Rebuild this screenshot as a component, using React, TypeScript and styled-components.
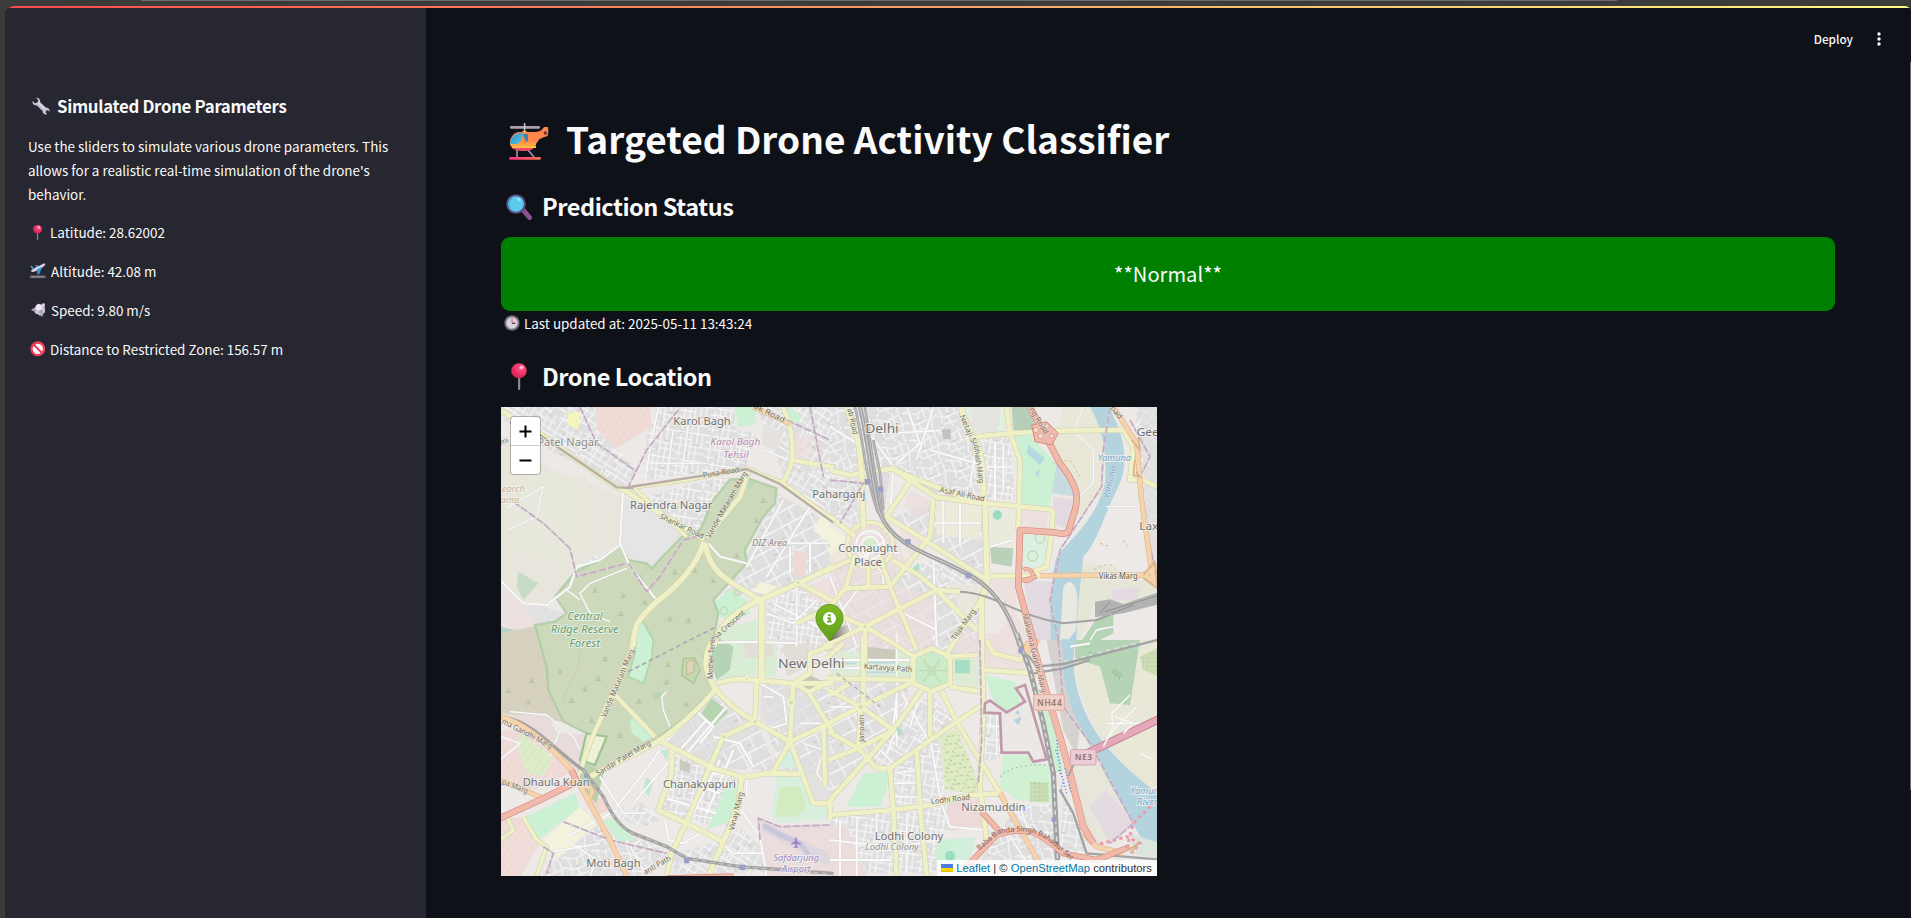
import React from "react";
import styled, { createGlobalStyle } from "styled-components";

const GlobalStyle = createGlobalStyle`
  * { box-sizing: border-box; }
  html, body { margin: 0; padding: 0; background: #3b3b3b; overflow: hidden; }
  body { font-family: "Noto Sans CJK JP", "Noto Sans", sans-serif; color: #fafafa; }
  h1, h2, h3, p { margin: 0; font-weight: 400; }
  svg { display: block; }
`;

const Window = styled.div`
  display: flex;
  flex-direction: column;
  height: 918px;
  padding-left: 5px;
  background: #3b3b3b;
`;
const TabEdge = styled.div`
  height: 1px;
  width: 1476px;
  margin: 0 0 5px 136px;
  background: #6a6b6b;
`;
const AppFrame = styled.div`
  position: relative;
  flex: 1;
  display: flex;
  flex-direction: column;
  overflow: hidden;
  border-radius: 9px 6px 0 0;
  background: #0e1117;
`;
const Decoration = styled.div`
  height: 2px;
  flex: none;
  background: linear-gradient(90deg, rgb(255, 75, 75), rgb(255, 253, 128));
`;
const Columns = styled.div`
  flex: 1;
  display: flex;
`;
const Sidebar = styled.aside`
  width: 421px;
  flex: none;
  padding: 86px 23px 0;
  background: #262730;
`;
const Main = styled.main`
  flex: 1;
  display: flex;
  flex-direction: column;
  padding: 0 76px 0 75px;
`;
const Toolbar = styled.header`
  display: flex;
  align-items: center;
  justify-content: flex-end;
  height: 62px;
  margin: 0 -50px 41px 0;
  gap: 20px;
`;
const DeployButton = styled.span`
  font-size: 11.75px;
  font-weight: 500;
  line-height: 20px;
`;
const Scrollbar = styled.div`
  position: absolute;
  right: 0;
  top: 56px;
  width: 1px;
  height: 728px;
  background: #6b6b70;
`;
const SideTitle = styled.h3`
  display: flex;
  align-items: center;
  height: 24px;
  font-size: 16.8px;
  font-weight: 600;
  letter-spacing: -0.3px;
  white-space: nowrap;
`;
const SideText = styled.p`
  margin-top: 15px;
  padding-top: 1px;
  margin-bottom: -1px;
  font-size: 13.43px;
  line-height: 24px;
  white-space: nowrap;
`;
const SideItem = styled.p`
  display: flex;
  align-items: center;
  height: 24px;
  margin-top: 15px;
  font-size: 13.43px;
  white-space: nowrap;
`;
const Heading = styled.h2<{ $size: number; $height: number; $gap: number; $tracking?: number }>`
  display: flex;
  align-items: center;
  height: ${(p) => p.$height}px;
  padding-top: 1px;
  margin-bottom: ${(p) => p.$gap}px;
  font-size: ${(p) => p.$size}px;
  font-weight: 700;
  letter-spacing: ${(p) => p.$tracking ?? 0}px;
  white-space: nowrap;
`;
const IconSlot = styled.span<{ $w: number; $pad: number; $drop?: number }>`
  display: flex;
  width: ${(p) => p.$w}px;
  flex: none;
  padding-left: ${(p) => p.$pad}px;
  padding-top: ${(p) => p.$drop ?? 0}px;
`;
const Banner = styled.div`
  display: flex;
  align-items: center;
  justify-content: center;
  height: 74px;
  border-radius: 9px;
  background: #008000;
  font-size: 20.15px;
  padding-bottom: 2px;
`;
const Updated = styled.p`
  display: flex;
  align-items: center;
  height: 24px;
  margin-bottom: 23px;
  padding-bottom: 1px;
  font-size: 13.43px;
  white-space: nowrap;
`;
const MapFrame = styled.div`
  position: relative;
  width: 656px;
  height: 469px;
  overflow: hidden;
  background: #ddd;
`;
const ZoomControl = styled.div`
  position: absolute;
  left: 10px;
  top: 10px;
  width: 29px;
  border-radius: 3px;
  background: #fff;
  box-shadow: 0 0 0 1px rgba(0, 0, 0, 0.25);
`;
const ZoomButton = styled.div`
  display: flex;
  align-items: center;
  justify-content: center;
  height: 28px;
  & + & { border-top: 1px solid #ccc; height: 29px; }
`;
const Attribution = styled.div`
  position: absolute;
  right: 0;
  bottom: 0;
  display: flex;
  align-items: center;
  height: 16px;
  padding: 0 5px 1px 4px;
  background: rgba(255, 255, 255, 0.8);
  color: #333;
  font: 11.25px "Liberation Sans", Arial, sans-serif;
  white-space: pre;
  a { color: #0078a8; }
  svg { margin-right: 3px; }
`;
const MarkerPin = styled.div`
  position: absolute;
  left: 313px;
  top: 195px;
`;

/* ---------- Emoji drawings ---------- */
const PinEmoji = ({ w, h }: { w: number; h: number }) => (
  <svg width={w} height={h} viewBox="0 0 16 28" preserveAspectRatio="none">
    <defs>
      <radialGradient id="ball" cx=".65" cy=".3" r=".7">
        <stop offset="0" stopColor="#ff8aa8" /><stop offset=".3" stopColor="#ff4378" /><stop offset="1" stopColor="#d61f55" />
      </radialGradient>
    </defs>
    <rect x="7" y="13" width="2.2" height="15" rx="1.1" fill="#8d8595" />
    <circle cx="8" cy="8" r="7.8" fill="url(#ball)" />
    <ellipse cx="10.6" cy="4.5" rx="1.7" ry="2" fill="#ffc4d2" />
  </svg>
);
const Helicopter = () => (
  <svg width="40" height="37" viewBox="0 0 40 37">
    <defs>
      <linearGradient id="hull" x1="0" y1="0" x2="0" y2="1">
        <stop offset="0" stopColor="#ff8648" /><stop offset=".6" stopColor="#ff884c" /><stop offset=".75" stopColor="#ffb43d" /><stop offset=".84" stopColor="#f34e63" /><stop offset="1" stopColor="#f0446d" />
      </linearGradient>
      <linearGradient id="glass" x1="0" y1="0" x2="1" y2="1">
        <stop offset="0" stopColor="#2a91c9" /><stop offset="1" stopColor="#51c5e8" />
      </linearGradient>
      <linearGradient id="skid"><stop offset="0" stopColor="#f4327e" /><stop offset="1" stopColor="#f9704d" /></linearGradient>
    </defs>
    <rect x="1" y="3" width="30" height="2.7" rx="1.3" fill="#aaa2b0" />
    <path d="M15.6 0v9" stroke="#d1c8d4" strokeWidth="1.4" />
    <path d="M12.5 9.5q3-4 6 0z" fill="#ffc445" />
    <path d="M8 27v7M19 27l6 7" stroke="#a994b3" strokeWidth="1.6" />
    <path d="M10 9h16q5-.5 7-2.500 1.500-2.500 2.500-2.500h3.500q1 5-.5 9-5 1-8.500 3.500-1.500 3-2.500 3.500c-1 5-5 8-11 8H13C5 28 0 24.500 1 18 2 13 6 9 10 9z" fill="url(#hull)" />
    <path d="M10 10q3-1 4 1l-2 6q-1 4-6 4H1q0-8 9-11z" fill="url(#glass)" />
    <path d="M14 11h5v6q0 2-2 2-2-4-3-8z" fill="#3a84a9" />
    <path d="M3 24h24" stroke="#ffbd42" strokeWidth="2" />
    <circle cx="36.300" cy="10" r="1.800" fill="#6b3330" />
    <rect x="0" y="34" width="32" height="2.800" rx="1.400" fill="url(#skid)" />
  </svg>
);
const Magnifier = () => (
  <svg width="26" height="26" viewBox="0 0 26 26">
    <path d="M18 17l5.500 6.500" stroke="#8b5091" strokeWidth="5" strokeLinecap="round" />
    <path d="M15 14l3 3" stroke="#61486d" strokeWidth="3" />
    <circle cx="10" cy="10" r="8.800" fill="#5ecbee" stroke="#5a5086" strokeWidth="2" />
    <path d="M4 14a7 7 0 0 1 2-10" stroke="#45a9d2" strokeWidth="1.500" fill="none" />
    <ellipse cx="13" cy="5.500" rx="2" ry="1.300" fill="#9ce9fb" transform="rotate(35 13 5.500)" />
  </svg>
);
const Clock = () => (
  <svg width="16" height="16" viewBox="0 0 16 16">
    <circle cx="8" cy="8" r="7.700" fill="#777079" />
    <circle cx="8" cy="8" r="5.800" fill="#d9d3dd" />
    <path d="M8 3.500V8" stroke="#e2506e" strokeWidth="1" />
    <path d="M8 8.300h3.500" stroke="#46404c" strokeWidth="1.200" />
  </svg>
);
const Wrench = () => (
  <svg width="18" height="18" viewBox="0 0 18 18">
    <path d="M4 0.800 6.400 3.200 5.300 5.500 3 6.300.6 4C0 6.500 2 8.800 5 8.500L10.500 14C10.500 16.500 13 18 15.200 17.200L13.700 15.500 14.200 13.700 16 13.300 17.600 14.700C18.200 12.200 16 10.300 13.700 10.600L8.200 5.200C8.500 2.300 6.500.3 4 .8z" fill="#c9c0d2" />
    <path d="M7 6l6 6" stroke="#e9e2ee" strokeWidth="1.300" />
  </svg>
);
const Takeoff = () => (
  <svg width="16" height="16" viewBox="0 0 16 16">
    <rect x="0" y="12.500" width="15.500" height="2.600" fill="#777079" />
    <path d="M2 13.800h11" stroke="#aaa3ae" strokeWidth=".7" strokeDasharray="2 1" />
    <path d="M0 3l1.500-.5L4 5l-1 2zM5 2.500l2-.5 4 3-3 1z" fill="#3d9bd3" />
    <path d="M1 7.500C4 5 9 3 13 .8q3-1 2.300.8C13 5 8 7.800 3 9q-2 .2-2-1.500z" fill="#d8cddf" />
    <path d="M7 6.500 12 4 9.500 11 7.500 12z" fill="#2b9be0" />
  </svg>
);
const Puff = () => (
  <svg width="15" height="14" viewBox="0 0 15 14">
    <path d="M0 7 4 4.500C5 1 8-.3 10 1.600c3-.6 4.700 1 3.600 3.500 1.500 3-.6 5.400-2 6.400-2 2-4 .9-5-.5-2 .2-3-1-3-2.500z" fill="#cfc3da" />
    <circle cx="8" cy="4.500" r="3" fill="#efe8f4" /><circle cx="12.500" cy="1.600" r="1.400" fill="#e3dbe9" />
    <circle cx="10" cy="9" r="2" fill="#aa9cba" /><circle cx="11" cy="12.500" r="1" fill="#b3a6c2" />
    <path d="M2 7h3" stroke="#8f8399" />
  </svg>
);
const Prohibited = () => (
  <svg width="16" height="16" viewBox="0 0 16 16">
    <circle cx="7.800" cy="7.800" r="6.300" fill="#fff" stroke="#f23d5c" strokeWidth="2.300" />
    <path d="M3.800 3.800l8 8" stroke="#f23d5c" strokeWidth="2" />
  </svg>
);

/* ---------- Map data: four sheets, each 990 x 720 drawing units ---------- */
type Sheet = "nw" | "ne" | "sw" | "se";
const sheetShift: Record<Sheet, string> = {
  nw: "translate(0 0)",
  ne: "translate(990 0)",
  sw: "translate(0 720)",
  se: "translate(990 720)",
};
type Area = [Sheet, string, string];
const land = "#ece9e6", town = "#dfdedf", pink = "#ecdddb", park = "#ccf0d3", wood = "#cdd9bb", dark = "#b4d4b5", farm = "#e8e7d8", mauve = "#e3dae2", cream = "#f3f2dd", water = "#b3d3de";

const areas: Area[] = [
  ["nw", "M0 110 160 210 370 290 360 430 220 500 180 570 130 620 60 610 0 540z", "#e8e5dd"],
  ["nw", "M100 210 260 230V500L110 480 0 440V300z", "#e8e7dc"],
  ["nw", "M370 290 520 370 600 390 545 410 455 505 385 480 360 430z", "#e6e5e5"],
  ["nw", "M290 21H450L455 80 350 145 290 90z", "#f0dcd7"],
  ["nw", "M703 21H767V75L715 82zM870 21 905 50 890 70 860 60z", park],
  ["nw", "M205 38 240 36 235 90 205 75z", "#f5f5ba"],
  ["nw", "M55 515 115 550 70 600 50 560z", "#c6dbc5"],
  ["nw", "M0 550 60 610 120 700 100 720H0z", pink],
  ["nw", "M0 680 45 690 30 720H0z", "#b4d4cc"],
  ["nw", "M60 615 130 620 200 640 180 670 110 680z", town],
  ["nw", "M790 80 850 95 830 150 785 135z", "#e5e1df"],
  ["nw", "M880 100 940 110 930 180 880 175z", pink],
  ["nw", "M960 350 990 360V430L940 390z", cream],
  ["nw", "M880 450 920 455 915 530 880 520z", "#eed9d5"],
  ["nw", "M780 545 835 560 800 585 760 575z", cream],
  ["nw", "M640 610 690 570 740 600 750 640 700 670 640 640z", park],
  ["nw", "M920 560 990 530V620L930 590z", pink],
  ["ne", "M400 21H530L520 105H450z", "#dff0df"],
  ["ne", "M425 21H515L500 98 455 100 425 75z", "#e5e4e0"],
  ["ne", "M545 21H600L620 90H550z", "#b7cfb9"],
  ["ne", "M700 21H780L830 110 815 280 700 400 745 280 670 130z", farm],
  ["ne", "M545 105H600L680 195 660 325 575 312 560 180z", "#ccf0d3"],
  ["ne", "M595 135 645 175 630 195 590 160zM615 220 630 205 625 235z", "#b6dae2"],
  ["ne", "M680 190 725 230 740 290 665 280z", "#c8dbe0"],
  ["ne", "M670 290 735 300 710 390 670 370z", mauve],
  ["ne", "M575 320 655 332 650 385 575 380z", pink],
  ["ne", "M480 440 550 445 545 500 485 490z", "#b9d1b9"],
  ["ne", "M478 540 555 540 560 640 600 720 590 740H480L540 640z", pink],
  ["ne", "M580 540 665 545 680 720H615z", mauve],
  ["ne", "M580 400 665 405 650 490 600 515 580 480z", "#dcefe0"],
  ["ne", "M470 325 550 320 550 430 475 440z", "#e9ebdc"],
  ["ne", "M320 310 455 320 450 420 320 405z", "#eeeada"],
  ["ne", "M240 270 300 300 290 350 220 320zM200 360 290 410 240 470z", pink],
  ["ne", "M0 380 60 420 40 480 0 500z", cream],
  ["ne", "M0 470 60 410 190 400 230 490 180 550 330 590 300 740H0z", pink],
  ["ne", "M120 210 180 220 160 350 140 330z", mauve],
  ["ne", "M360 550 470 560 440 640 400 650z", "#e9e7dd"],
  ["ne", "M750 480 910 520 940 545 990 560V590L790 620 750 720H740z", "#e5e5d8"],
  ["ne", "M930 21H990V500L950 420z", town],
  ["ne", "M800 655 850 640 850 700 790 730H750z", dark],
  ["ne", "M845 570 930 560 920 600 850 600z", mauve],
  ["ne", "M780 21H835C885 100 900 200 860 270 820 350 800 430 760 470 750 560 740 650 740 722H695L663 720C655 600 670 500 680 470 740 400 800 350 825 250 830 150 820 90 780 21z", water],
  ["ne", "M700 560C720 530 740 550 743 600L738 690 715 720H690Q695 630 700 560z", "#e9e9e1"],
  ["sw", "M0-20 120-45 150 150 190 245 0 220z", "#d5d3bf"],
  ["sw", "M0 230 140 220 170 280 270 285 235 390 130 310z", "#e8dcda"],
  ["sw", "M0 270 60 270 150 330 210 400 100 450 0 420z", "#efdcd8"],
  ["sw", "M60 280 160 350 130 410 80 400 50 310z", "#dcedc8"],
  ["sw", "M75 530 225 460 240 500 115 600z", park],
  ["sw", "M0 540 70 530 120 610 60 708H0z", "#f0ddd9"],
  ["sw", "M120 610 240 500 290 550 180 650z", cream],
  ["sw", "M310 540 350 530 400 600 360 610z", park],
  ["sw", "M270 480 310 470 330 510 280 530z", "#f0d8d2"],
  ["sw", "M290 405 465 320 510 340 500 430 380 520z", land],
  ["sw", "M490 300 640 170 720 290 640 370z", town],
  ["sw", "M635 175 685 215 640 260 605 220z", "#b6d5ae"],
  ["sw", "M690 415 720 450 700 540 620 570z", park],
  ["sw", "M650-30 770-60 780 0 830 0V110L740 105 650 130z", "#d9edd6"],
  ["sw", "M650-10 700 20 690 90 650 120 630 60z", dark],
  ["sw", "M725 10H820V50L740 55zM850 10 930 10 920 80 860 110z", "#e3ddd8"],
  ["sw", "M785 130 870 140 865 280 780 240z", town],
  ["sw", "M885 150 930 160 980 250 880 290z", town],
  ["sw", "M885 400 990 260V490L940 480z", town],
  ["sw", "M890 130 930 105 980 130 930 155z", "#c8c9b6"],
  ["sw", "M870 320 905 385H830z", "#d5eee1"],
  ["sw", "M830 405 900 410 940 500 990 500V535L840 550 815 530z", "#d8efde"],
  ["sw", "M840 440 900 440 920 500 890 530H825z", "#d4ebc2"],
  ["sw", "M775 530 840 560 990 555 1040 560 1100 708H800z", "#eadddc"],
  ["sw", "M785 550 825 560 900 600 990 640V680L930 650 790 575z", "#ddd8e0"],
  ["sw", "M440 410 460 430 445 470 430 440zM480 330 505 330 500 360z", "#c0e7d1"],
  ["sw", "M540 360 570 370 570 400 540 390z", "#cac9bd"],
  ["se", "M0 35H240V110H0z", "#ddebd7"],
  ["se", "M110 20 200 30 195 65 110 55z", "#cccbbb"],
  ["se", "M205 65H245V110H205z", "#d7ead2"],
  ["se", "M250 50 305 25 360 50V130L305 155 250 130z", "#ccebc9"],
  ["se", "M370 50 445 55V150L370 125z", "#ddebd4"],
  ["se", "M375 60 420 60V100H375z", "#a6dfc6"],
  ["se", "M465-20H560L590 90 465 90z", pink],
  ["se", "M380-20H440L450 45 370 40zM210 180 260 150 230 200z", pink],
  ["se", "M465 105 555 125 570 190 530 215 490 180z", park],
  ["se", "M330 290 380 265 450 440 430 460 345 450z", "#dcecc5"],
  ["se", "M100 400 175 395 170 450 150 500H50z", park],
  ["se", "M350 490 455 475 460 560 360 570z", "#ecd9d8"],
  ["se", "M320 600 440 590 410 690 320 690z", "#d1efda"],
  ["se", "M320 600 380 600 350 660 320 680z", park],
  ["se", "M520 345 595 345 610 370 655 375 670 490 560 480 510 440z", "#d1f1d5"],
  ["se", "M600 425 655 428V485H600z", "#c9dcb4"],
  ["se", "M660 200 680 290 700 390 680 400 640 200z", park],
  ["se", "M650 0 700 0 715 60 750 260 740 350 700 270z", "#d5d2d0"],
  ["se", "M735 0H990V480C920 420 870 370 810 290 760 200 715 100 735 0z", farm],
  ["se", "M735 0H930L900 195 840 190 810 80 735 55z", dark],
  ["se", "M930 50 990 20V110L940 90z", "#cddcb5"],
  ["se", "M730 370 790 300 830 360 910 540 830 610 780 620 735 450z", "#e8e5db"],
  ["se", "M780 500 830 450 910 550 840 610z", mauve],
  ["se", "M695-2H737C715 100 750 200 800 280 880 390 940 420 990 470V700C920 560 860 480 810 370 740 250 700 170 700 60z", water],
  ["se", "M900 580 990 610V660L910 640z", "#dbe5dc"],
];

const dense: Area[] = [
  ["nw", "M0 21H290L290 90 350 145 410 215 370 262 110 130 0 50z", "url(#streetsA)"],
  ["nw", "M440 100 480 21H700L710 90 770 100 740 200 430 240z", "url(#streetsC)"],
  ["nw", "M370 310 600 245 690 230 640 300 600 390 455 500 385 480z", "url(#streetsC)"],
  ["nw", "M770 21H990V350L860 250 830 180z", "url(#streetsA)"],
  ["nw", "M830 280 990 370V500L900 540 780 590 650 580 740 470z", "url(#streetsB)"],
  ["nw", "M800 610 900 555 990 620V760H800z", "url(#streetsC)"],
  ["nw", "M200 500 290 450 310 480 230 510zM120 620 250 670 150 700z", "url(#streetsA)"],
  ["ne", "M0 21H400L450 130 460 310 330 290 190 210 100 230 0 210z", "url(#streetsD)"],
  ["ne", "M0 230 90 240 95 380 0 350z", "url(#streetsD)"],
  ["ne", "M460 110 540 110 555 300H470z", "url(#streetsC)"],
  ["ne", "M170 360 300 310 460 320 460 520 300 430z", "url(#streetsB)"],
  ["ne", "M250 500 320 480 460 550 320 570z", "url(#streetsA)"],
  ["ne", "M0 500 100 480 240 500 460 590 450 770H0z", "url(#streetsB)"],
  ["ne", "M915 21H990V420L950 400z", "url(#streetsA)"],
  ["sw", "M130 310 160 280 270 290 235 390z", "url(#streetsA)"],
  ["sw", "M300 400 340 400 480 540 430 560 370 540z", "url(#streetsA)"],
  ["sw", "M465 300 640 170 770 250 830 390 640 385z", "url(#streetsB)"],
  ["sw", "M515 340 640 385 560 540 475 510z", "url(#streetsC)"],
  ["sw", "M640 400 720 415 690 560 570 545z", "url(#streetsC)"],
  ["sw", "M180 650 300 550 370 560 500 640 450 708H120z", "url(#streetsD)"],
  ["sw", "M520 640 680 600 720 560 780 620 800 700H520z", "url(#streetsA)"],
  ["sw", "M780 130 1000 150V400H830z", "url(#streetsB)"],
  ["se", "M0 130 250 120 190 270 0 480z", "url(#streetsB)"],
  ["se", "M190 250 300 160 380 240 180 380 90 370z", "url(#streetsA)"],
  ["se", "M190 370 330 280 345 470 190 500z", "url(#streetsC)"],
  ["se", "M0 530 450 480 460 560 320 580 320 700H0z", "url(#streetsC)"],
  ["se", "M465 220H510V360H465z", "url(#streetsC)"],
  ["se", "M430 690 500 590 560 500 665 490V560L690 630 700 700z", "url(#streetsD)"],
  ["se", "M700 470 770 600 760 650 690 620z", "url(#streetsC)"],
];

type Line = [Sheet, string, number?];
const whiteRoads: Line[] = [
  ["nw", "M370 262 360 430 390 500 470 600M360 435 300 480 230 500 210 560 140 615 70 610 0 540", 6],
  ["nw", "M20 325 130 260 110 350 20 390M380 505 270 550 240 580 270 640 330 665M200 570 240 600", 4],
  ["nw", "M475 21 450 150 435 250M520 90 500 230M570 40 545 220M450 190 600 190M790 150 890 190M625 430 660 470 740 490", 5],
  ["nw", "M890 550 890 740M820 610 990 700M800 640 880 670 950 600M740 500 850 300M800 530 930 320M870 440V520M930 430V520M830 430H990", 6],
  ["ne", "M60 21 190 200 180 360M190 100 350 90M0 80 80 130M230 21 270 130 200 190M310 21 260 180M300 150 440 190M440 130 420 260", 6],
  ["ne", "M495 130V300M520 130V270M470 200H540M340 300V430M390 310V430M300 370H450M310 480 320 740M480 440 550 420", 6],
  ["ne", "M760 21 730 90 790 150 790 250 740 300M920 220 930 190M830 320H920M900 360V480M780 720 800 690 850 680", 4],
  ["ne", "M30 450 210 460M60 420 180 540M190 400 60 510M160 490 160 560M0 530 80 740M220 640 320 690M30 640 90 560", 6],
  ["sw", "M510 260 490 210 485 170 500 155M30 215 140 225 220 290 240 330M180 270 150 350", 4],
  ["sw", "M490 310 590 215 640 260 600 310M540 330 620 240M510 320 560 340 680 200M700 330 620 520M660 360 570 540M640 290 720 310 760 380M540 420 660 460M500 475 650 520", 7],
  ["sw", "M300 410 370 520 440 520M350 500 430 400 480 330M350 510 200 590M520 350 400 490M495 540 505 600 550 610 600 580", 6],
  ["sw", "M780 130 850 170 860 250 800 270M790 170 820 170M730 415 640 400M715 500 780 590 800 708M740 470V410M640 590 700 640H790M640 8 740 5 890 10", 6],
  ["sw", "M0 290 60 310 0 360M130 640 300 610M200 600 290 660 270 708M380 600 440 708M900 250 980 250M910 310 970 330 950 400 990 450", 5],
  ["se", "M200-20V320M0 60H240M0 85H240M215 160 290 290M120 300 190 370M0 200H80M200 170 190 260M230 190 170 340M265 180 240 260", 6],
  ["se", "M200 400 260 390M190 430H260M190 470H270M300 290 330 470M330 480 360 560 460 570M30 540V708M80 530V708M140 520V640M230 520V700M0 600 180 620M0 660H180M210 620 320 600", 6],
  ["se", "M500 220V350M470 260H510M470 300H510M570 500 590 560 690 610M520 560 600 680M740 490 780 620M720 20 780 10M920 200 860 260 800 340M830 250 930 250", 5],
];
const yellowRoads: Line[] = [
  ["nw", "M0 30 120 100 250 195 350 262 380 275 480 340 612 418"],
  ["nw", "M745 215 720 290 620 410", 14],
  ["nw", "M612 425C590 500 530 560 470 605 410 660 400 680 400 740", 16],
  ["nw", "M615 430C630 520 680 540 780 600", 16],
  ["nw", "M640 740C650 690 690 640 780 600L900 548 1000 500", 16],
  ["nw", "M785 600V850", 18],
  ["nw", "M895 548 1000 605M850 21C880 100 880 150 875 180L1000 202M875 180Q870 220 845 250"],
  ["nw", "M560 410 400 262 560 240 740 205 850 250 1000 360", 10],
  ["ne", "M0 210 60 225 190 205 240 240 320 292 465 310 560 318 670 330"],
  ["ne", "M50 21 85 120 95 220 100 390M395 21C395 60 430 100 440 130 465 180 455 250 465 310L472 560 455 590 455 730", 16],
  ["ne", "M530 21 540 100 570 180 565 390M440 110 540 100 700 92 880 90 910 140"],
  ["ne", "M240 245 170 350 300 430 472 540M190 210 420 300M310 300 300 410 180 560 50 565"],
  ["ne", "M-5 345 75 410M165 400 175 370M185 480 260 520 320 570 390 575M55 555-5 625-100 670M105 680 320 570 440 690M105 680-10 630M105 680V800M105 680 190 730 250 770M105 680-20 740"],
  ["ne", "M180 560 260 750M465 580 345 770M115 475V560M60 480-5 510M75 465 45 570M150 470 180 560", 13],
  ["ne", "M470 530 630 525M670 330 660 440 650 500 600 520M910 140 900 240 940 240 980 260"],
  ["sw", "M400 0C390 60 350 130 330 180 300 240 260 320 240 400M345 165 465 290", 13],
  ["sw", "M270 410 465 310Q560 250 645 150M470 298 640 385 730 412 800 400 900 402", 15],
  ["sw", "M640 0C600 60 620 100 645 145 680 190 720 220 765 245L870 305", 15],
  ["sw", "M650 130 700 118 740 118 880 130 1000 130M770 120 765 245 670 290 630 380 560 545 515 640 500 708"],
  ["sw", "M880 130 870 305 820 395M880 130 930 100 930 40 1000 15M880 130 925 155 1000 280M930 155 1000 120M870 305 1000 245M870 305 940 490H1000M970 250 975 440"],
  ["sw", "M515 330V400L475 510 560 550 670 605 625 708M725 412 715 500 670 605", 15],
  ["sw", "M0 600 40 570 20 530M70 530 110 600 140 620 110 708", 11],
  ["se", "M250 50 305 25 360 50V130L305 155 250 130zM-10 115 250 120M100-10V200M-10 55 40 10"],
  ["se", "M92 200-5 150M92 200-5 250M92 200 250 125M92 200 190 270M92 200 85 325M85 325-5 275M60 130 0 165M85 325 190 270M85 325-5 360"],
  ["se", "M275 150 190 270 0 480M300 160V290M335 155 380 245 510 460M85 325 140 385H180L190 510 200 708M180 385 380 245 450 200"],
  ["se", "M260 330 270 500 290 708M0 525 190 510 300 495 420 465 520 460M0 480V540"],
  ["se", "M360 140 450 155M360 50 445 45M455 0 460 200 450 440 470 600M455 90 620 100M470 0 490 40 570 60 600 20M345 50 360 50"],
];
const orangeRoads: Line[] = [
  ["nw", "M760 21 870 72", 12],
  ["ne", "M630 527 940 525 1000 490M850 21 920 130 935 300 960 480 970 540M940 525 1000 560", 13],
  ["sw", "M0 230C80 250 150 320 215 390L270 490 330 600 380 708", 14],
  ["sw", "M0 420 130 475M245 445A18 18 0 1 1 255 475", 12],
  ["se", "M510 460 560 550 650 708", 13],
  ["se", "M760 580 800 620 880 640M600 40A20 20 0 1 1 625 10", 13],
];
const redRoads: Line[] = [
  ["ne", "M600 21 640 95 690 190C745 260 745 290 735 330L715 395Q705 405 680 398L570 390 565 560 615 740", 16],
  ["ne", "M580 510A18 18 0 1 1 580 540L620 530", 9],
  ["sw", "M0 535 120 480 230 425 215 390", 16],
  ["se", "M605 0 650 160 690 290 720 400 760 560 790 610", 17],
  ["se", "M400 690 500 585C600 550 640 590 700 640L800 660 900 620M455 515 510 575", 14],
  ["sw", "M500 712 700 706", 8],
];
const railways: Line[] = [
  ["ne", "M90 21C120 150 130 280 150 340 180 420 260 450 350 490 450 540 520 570 570 740", 11],
  ["ne", "M75 21C105 150 110 250 145 340M105 21C125 150 140 280 160 350M130 120 150 220 160 330", 6],
  ["ne", "M390 575C500 580 560 650 700 670L800 660 1000 580", 4],
  ["sw", "M0 230C100 240 160 330 250 390L310 470Q350 560 400 580L500 620 560 655 720 680 1000 700", 8],
  ["se", "M560-20 600 90 640 250 670 400 685 708", 14],
  ["se", "M575 20 620 80 700 72 1000-5M610 100 700 85 780 60", 5],
  ["se", "M690 450 730 520 770 640 1000 660", 5],
];
const boundaries: Line[] = [
  ["nw", "M240 21 290 130 410 215M535 30 440 150 385 260M930 21 970 230M860 60 990 120M40 305 130 370 210 445 230 530 380 490"],
  ["nw", "M385 490 440 575 480 530 550 420 610 405"],
  ["ne", "M840 21 820 150 815 260 690 450 660 600 685 720M900 60 960 170 930 230M950 400 990 560M0 240 100 250 30 370"],
  ["se", "M685 0 700 200 780 310 910 550 840 610M450 0 455 300 445 430"],
  ["sw", "M780 600 775 535 840 560 990 555M190 545 330 600 500 640M130 620 160 640 140 700"],
];

const trees: [Sheet, number, number][] = [
  ["nw", 770, 360], ["nw", 790, 300], ["nw", 695, 315], ["nw", 710, 465], ["nw", 525, 515], ["nw", 640, 540], ["nw", 285, 570], ["nw", 370, 585], ["nw", 435, 605], ["nw", 510, 655], ["nw", 362, 640], ["nw", 565, 660], ["nw", 585, 510], ["nw", 420, 530],
  ["sw", 315, 55], ["sw", 180, 95], ["sw", 95, 120], ["sw", 255, 145], ["sw", 295, 115], ["sw", 215, 180], ["sw", 85, 185], ["sw", 418, 182], ["sw", 505, 72], ["sw", 500, 125], ["sw", 560, 190], ["sw", 360, 285], ["sw", 275, 240], ["sw", 25, 150],
];

type Label = { s: Sheet; x: number; y: number; w: number; t: string; size?: number; color?: string; italic?: boolean; rot?: number };
const labels: Label[] = [
  { s: "nw", x: 520, y: 75, w: 172, t: "Karol Bagh", size: 34 },
  { s: "nw", x: 112, y: 138, w: 184, t: "Patel Nagar", size: 34, color: "#8c8c8c" },
  { s: "nw", x: 631, y: 136, w: 150, t: "Karol Bagh", size: 28, italic: true, color: "#b48cb4" },
  { s: "nw", x: 670, y: 173, w: 76, t: "Tehsil", size: 28, italic: true, color: "#b48cb4" },
  { s: "nw", x: 390, y: 326, w: 247, t: "Rajendra Nagar", size: 34 },
  { s: "nw", x: 937, y: 293, w: 159, t: "Paharganj", size: 34 },
  { s: "nw", x: 756, y: 437, w: 105, t: "DIZ Area", size: 25, italic: true, color: "#888" },
  { s: "nw", x: 202, y: 660, w: 106, t: "Central", size: 32, italic: true, color: "#61a273" },
  { s: "nw", x: 152, y: 699, w: 204, t: "Ridge Reserve", size: 32, italic: true, color: "#61a273" },
  { s: "sw", x: 208, y: 20, w: 92, t: "Forest", size: 32, italic: true, color: "#61a273" },
  { s: "nw", x: 5, y: 276, w: 70, t: "earch", size: 25, italic: true, color: "#c7b298" },
  { s: "nw", x: 3, y: 309, w: 56, t: "arms", size: 25, italic: true, color: "#c7b298" },
  { s: "nw", x: 610, y: 233, w: 110, t: "Pusa Road", size: 23, rot: -9, color: "#6f6a4e" },
  { s: "nw", x: 478, y: 354, w: 143, t: "Shankar Road", size: 23, rot: 26, color: "#6f6a4e" },
  { s: "nw", x: 630, y: 415, w: 225, t: "Vande Mataram Marg", size: 23, rot: -60, color: "#6f6a4e" },
  { s: "nw", x: 760, y: 24, w: 100, t: "ak Road", size: 23, rot: 26, color: "#6f6a4e" },
  { s: "nw", x: 4, y: 136, w: 26, t: "mi", size: 22, rot: -25, color: "#6f6a4e" },
  { s: "nw", x: 640, y: 725, w: 128, t: "esa Crescent", size: 23, rot: -41, color: "#6f6a4e" },
  { s: "ne", x: 106, y: 98, w: 100, t: "Delhi", size: 39 },
  { s: "ne", x: 25, y: 456, w: 177, t: "Connaught", size: 34 },
  { s: "ne", x: 72, y: 499, w: 84, t: "Place", size: 34 },
  { s: "ne", x: 920, y: 109, w: 66, t: "Gee", size: 34 },
  { s: "ne", x: 928, y: 391, w: 57, t: "Lax", size: 34 },
  { s: "ne", x: 52, y: 27, w: 80, t: "ab Road", size: 23, rot: 77, color: "#6f6a4e" },
  { s: "ne", x: 388, y: 49, w: 90, t: "Netaji S", size: 23, rot: 65, color: "#6f6a4e" },
  { s: "ne", x: 430, y: 127, w: 124, t: "ubhash Marg", size: 23, rot: 82, color: "#6f6a4e" },
  { s: "ne", x: 328, y: 276, w: 137, t: "Asaf Ali Road", size: 23, rot: 12, color: "#6f6a4e" },
  { s: "ne", x: 596, y: 28, w: 90, t: "ng Road", size: 23, rot: 58, color: "#866156" },
  { s: "ne", x: 840, y: 26, w: 42, t: "oad", size: 22, rot: 50, color: "#6f6a4e" },
  { s: "ne", x: 803, y: 184, w: 100, t: "Yamuna", size: 27, italic: true, color: "#7aa4c8" },
  { s: "ne", x: 837, y: 296, w: 98, t: "Yamuna", size: 27, italic: true, color: "#7aa4c8", rot: -77 },
  { s: "ne", x: 806, y: 537, w: 117, t: "Vikas Marg", size: 24, color: "#655a4a" },
  { s: "ne", x: 376, y: 722, w: 108, t: "Tilak Marg", size: 23, rot: -55, color: "#6f6a4e" },
  { s: "ne", x: 576, y: 642, w: 245, t: "Mahatma Gandhi Marg", size: 23, rot: 76, color: "#866156" },
  { s: "sw", x: 834, y: 83, w: 200, t: "New Delhi", size: 37 },
  { s: "sw", x: 68, y: 437, w: 201, t: "Dhaula Kuan", size: 34 },
  { s: "sw", x: 489, y: 443, w: 219, t: "Chanakyapuri", size: 34 },
  { s: "sw", x: 259, y: 680, w: 163, t: "Moti Bagh", size: 34 },
  { s: "sw", x: 4, y: 250, w: 167, t: "ma Gandhi Marg", size: 23, rot: 27, color: "#766955" },
  { s: "sw", x: 4, y: 431, w: 82, t: "pa Marg", size: 23, rot: 21, color: "#766955" },
  { s: "sw", x: 317, y: 234, w: 220, t: "Vande Mataram Marg", size: 23, rot: -67, color: "#6f6a4e" },
  { s: "sw", x: 294, y: 408, w: 186, t: "Sardar Patel Marg", size: 23, rot: -31, color: "#6f6a4e" },
  { s: "sw", x: 638, y: 118, w: 120, t: "Mother Tere", size: 23, rot: -87, color: "#6f6a4e" },
  { s: "sw", x: 702, y: 572, w: 118, t: "Vinay Marg", size: 23, rot: -76, color: "#6f6a4e" },
  { s: "sw", x: 436, y: 704, w: 90, t: "anti Path", size: 23, rot: -30, color: "#6f6a4e" },
  { s: "sw", x: 820, y: 662, w: 137, t: "Safdarjung", size: 26, italic: true, color: "#9b87c7" },
  { s: "sw", x: 846, y: 695, w: 86, t: "Airport", size: 26, italic: true, color: "#9b87c7" },
  { s: "se", x: 101, y: 86, w: 146, t: "Kartavya Path", size: 23, rot: 4, color: "#6f6a4e" },
  { s: "se", x: 101, y: 306, w: 82, t: "Janpath", size: 23, rot: -90, color: "#6f6a4e" },
  { s: "se", x: 304, y: 493, w: 118, t: "Lodhi Road", size: 23, rot: -7, color: "#6f6a4e" },
  { s: "se", x: 394, y: 512, w: 192, t: "Nizamuddin", size: 34 },
  { s: "se", x: 134, y: 601, w: 206, t: "Lodhi Colony", size: 34 },
  { s: "se", x: 106, y: 629, w: 160, t: "Lodhi Colony", size: 26, italic: true, color: "#929292" },
  { s: "se", x: 902, y: 461, w: 100, t: "Yamuna", size: 26, italic: true, color: "#7aa4c8" },
  { s: "se", x: 921, y: 494, w: 62, t: "River", size: 26, italic: true, color: "#7aa4c8" },
];

const forestPath =
  "M690 238 745 235 830 265 825 310 790 350 735 450 740 490 640 600 655 640 640 720 610 770 625 820 645 865 560 950 465 1020 270 1130 235 1110 270 1005 190 965 145 870 140 800 105 675 165 665 200 640 165 590 225 515 300 480 360 435 385 480 440 490 455 505 545 410 600 390 640 300z";

const Streets = ({ id, angle, d }: { id: string; angle: number; d: string }) => (
  <pattern id={id} width="90" height="84" patternUnits="userSpaceOnUse" patternTransform={`rotate(${angle})`}>
    <rect width="90" height="84" fill="#e0dfdf" />
    <path d={d} stroke="#f9f9f9" strokeWidth="3.400" fill="none" />
    <path d="M10 8h9v5h-9zM56 39h12v6H56zM34 66h6v8h-6z" fill="#d3d1cf" />
  </pattern>
);

const Roads = ({ items, width, color, dash }: { items: Line[]; width: (w: number) => number; color: string; dash?: string }) => (
  <g fill="none" stroke={color} strokeLinejoin="round" strokeDasharray={dash}>
    {items.map(([s, d, w], i) => (
      <path key={i} d={d} transform={sheetShift[s]} strokeWidth={width(w ?? 14)} />
    ))}
  </g>
);

const arterials: Line[] = [
  ["se", "M605 0 650 160 690 290 720 400 760 560 790 610", 17],
  ["se", "M400 690 500 585C600 550 640 590 700 640", 14],
];

/* Baba Banda Singh Bahadur Setu follows the curve of its road */
const bridgeCurve = "M1438 1352 1495 1303C1590 1280 1630 1300 1712 1382";

const CityMap = () => (
  <svg width="656" height="469" viewBox="3 21 1968 1407">
    <defs>
      <Streets id="streetsA" angle={32} d="M0 10H90M0 32H60M20 57H90M0 78H90M12 0V84M34 10V57M57 0V84M78 32V84M45 57V84M24 10V32" />
      <Streets id="streetsB" angle={-28} d="M0 20H90M0 62H90M30 0V84M72 20V62M50 62V84" />
      <Streets id="streetsC" angle={9} d="M0 8H90M0 28H45M0 48H90M45 66H90M14 8V84M30 0V48M45 8V84M62 0V84M78 8V48M0 72H45" />
      <Streets id="streetsD" angle={-14} d="M0 12 30 8 60 20 90 12M0 45 25 38 50 50 90 45M10 0 14 40 5 84M38 10 44 48 36 84M66 18 60 50 72 84M44 70 90 66M80 0 84 46" />
      <pattern id="hatch" width="18" height="18" patternUnits="userSpaceOnUse" patternTransform="rotate(35)">
        <path d="M0 0V18" stroke="#dfa7a0" strokeWidth="2" opacity=".45" />
      </pattern>
      <pattern id="orchard" width="13" height="13" patternUnits="userSpaceOnUse"><circle cx="6" cy="6" r="2" fill="#a7c195" /></pattern>
      <pattern id="scrub" width="32" height="26" patternUnits="userSpaceOnUse" patternTransform="rotate(20)">
        <path d="M2 5l10 3M18 16l9-5M6 21l7-2" stroke="#c7ba92" strokeWidth="3" />
      </pattern>
      <path id="bridge" d={bridgeCurve} />
    </defs>
    <rect x="0" y="0" width="1980" height="1440" fill={land} />
    {dense.map(([s, d, f], i) => <path key={i} d={d} fill={f} transform={sheetShift[s]} />)}
    {areas.map(([s, d, f], i) => <path key={i} d={d} fill={f} transform={sheetShift[s]} opacity={f === pink || f === town ? 0.65 : 1} />)}
    <path d="M290 21H450L455 80 350 145 290 90zM0 690 120 680 150 870 190 965 0 940zM0 1000 60 990 210 1120 100 1170 0 1140zM0 1260 70 1250 120 1330 60 1428H0z" fill="url(#hatch)" />
    <path d="M1330 1010 1370 985 1440 1160 1420 1180 1335 1170z" fill="url(#scrub)" />
    <path d="M1590 1145 1645 1148V1205H1590zM1920 770 1980 740V830L1930 810z" fill="url(#orchard)" />
    <path d="M1090 788H1190M1090 817H1185M900 790H1070" stroke="#bcd8df" strokeWidth="5" />
    <path d={forestPath} fill={wood} />
    <path d={forestPath} fill="none" stroke="#a9c9a0" strokeWidth="7" opacity=".75" />
    <path d="M410 690 425 660 460 720 455 770 430 850 385 830 405 760z" fill={park} stroke="#a8d4a6" strokeWidth="4" />
    <path d="M390 960 410 950 465 1005 430 1025 395 1000z" fill={park} />
    <path d="M260 1000 320 1010 285 1095 240 1080z" fill="#eff0d8" stroke="#9fc493" strokeWidth="7" />
    <path d="M550 775 585 775 600 810 580 850 545 825z" fill="#c4d8ae" stroke="#a4c596" strokeWidth="4" />
    <path d="M560 785 582 780 582 815 560 825z" fill="#ddd6b9" stroke="#bda88b" strokeWidth="2" />
    <path d="M240 1080 310 1120 290 1210 240 1170z" fill="#bcd0ae" />
    <path d="M455 885 480 875 490 890 465 900z" fill="#b6d7b2" />
    {trees.map(([s, x, y], i) => (
      <path key={i} transform={`${sheetShift[s]} translate(${x} ${y})`} d="M0-8V7M-7-3Q-2 0-1 6M7-3Q2 0 1 6M-10 7H10" stroke="#adbb98" strokeWidth="2" fill="none" />
    ))}
    <Roads items={whiteRoads} width={(w) => w + 2} color="#d4d3d1" />
    <Roads items={whiteRoads} width={(w) => w} color="#fafafa" />
    <g fill="none">
      <circle cx="1110" cy="435" r="68" stroke="#cfd0b2" strokeWidth="14" />
      <circle cx="1110" cy="435" r="68" stroke="#eef0c7" strokeWidth="11" />
      <circle cx="1110" cy="435" r="54" stroke="#ecdddb" strokeWidth="14" />
      <circle cx="1110" cy="435" r="42" stroke="#fafafa" strokeWidth="5" />
      <circle cx="1110" cy="435" r="25" stroke="#fafafa" strokeWidth="5" fill="#d8ecd0" />
    </g>
    <Roads items={yellowRoads} width={(w) => w + 3} color="#cdceae" />
    <Roads items={yellowRoads} width={(w) => w} color="#eff0c6" />
    <g fill="#cfdcb6" stroke="#eff0c6" strokeWidth="6">
      <circle cx="1082" cy="920" r="9" /><circle cx="1095" cy="680" r="7" /><circle cx="895" cy="548" r="7" /><circle cx="765" cy="965" r="8" /><circle cx="873" cy="908" r="9" /><circle cx="672" cy="1010" r="8" /><circle cx="740" cy="838" r="6" />
    </g>
    <g fill="none" stroke="#bfdcb5" strokeWidth="4">
      <circle cx="1295" cy="812" r="12" /><path d="M1270 780 1320 845M1320 780 1270 845M1255 812H1345" />
      <circle cx="1620" cy="415" r="14" /><circle cx="1598" cy="468" r="15" />
      <circle cx="672" cy="632" r="11" /><circle cx="710" cy="578" r="8" />
    </g>
    <path d="M1455 910 1470 902 1520 937 1575 905 1548 865 1575 855 1640 1078 1600 1085 1585 1058 1505 1058 1500 940 1453 938z" fill="#ebe8e6" stroke="#c09aab" strokeWidth="8" />
    <path d="M1545 940 1555 930 1560 945zM1540 960 1565 950 1555 975z" fill={water} />
    <g fill="none">
      <path d="M370 264 610 227 740 207 840 252 1000 368M120 105 350 262 400 264" stroke="#b9ada6" strokeWidth="7" />
      <path d="M1010 820 1140 920" stroke="#b3b3b3" strokeWidth="4" strokeDasharray="14 8" />
      <path d="M385 815 560 725 650 680" stroke="#aaa8b4" strokeWidth="5" strokeDasharray="14 9" />
      <path d="M1500 1130C1530 1100 1590 1090 1650 1096" stroke="#b2ada9" strokeWidth="4" strokeDasharray="4 10" />
      <path d="M190 900 200 870 235 800 240 750" stroke="#d2c593" strokeWidth="3" strokeDasharray="9 7" />
    </g>
    <Roads items={boundaries} width={() => 5} color="#ddd0db" />
    <Roads items={boundaries} width={() => 5} color="#c4abc2" dash="22 7" />
    <Roads items={railways} width={(w) => w + 2} color="#a3a3a3" />
    <Roads items={railways.slice(0, 2)} width={(w) => w / 4} color="#d9d9d9" />
    <path d="M1785 605 1830 598 1870 612 1980 575V612L1870 640 1785 652z" fill="#b2b2b2" />
    <path d="M1800 640 1830 605M1815 635 1980 585M1835 640 1900 615" stroke="#8f8f8f" strokeWidth="3" fill="none" />
    <g fill="none" stroke="#e2e2e2" strokeWidth="4" strokeDasharray="14 12">
      <path d="M1550 700 1590 810 1630 970 1660 1120 1675 1428M1615 795 1690 785 1980 712" />
      <path d="M250 1110 310 1190Q350 1280 400 1300L500 1340 560 1375 720 1400 980 1420" strokeWidth="2" />
    </g>
    <Roads items={orangeRoads} width={(w) => w + 3} color="#dcae87" />
    <Roads items={orangeRoads} width={(w) => w} color="#f5d3ad" />
    <Roads items={redRoads} width={(w) => w + 4} color="#d58b7e" />
    <Roads items={redRoads} width={(w) => w} color="#f0b9a9" />
    <Roads items={arterials} width={(w) => w} color="#f0b9a9" />
    <path d="M1595 75 1640 65 1675 100 1655 135 1605 125z" fill="#f0b9a9" stroke="#d58b7e" strokeWidth="3" />
    <g fill="#eadfd5" stroke="#d58b7e" strokeWidth="2"><circle cx="1608" cy="90" r="8" /><circle cx="1622" cy="108" r="8" /><circle cx="1641" cy="78" r="7" /><circle cx="1655" cy="108" r="7" /></g>
    <path d="M1705 1128 1730 1075 1795 1045 1980 955" fill="none" stroke="#a9a5a8" strokeWidth="6" />
    <path d="M1740 1070 1980 956" fill="none" stroke="#bd7d8d" strokeWidth="25" />
    <path d="M1740 1070 1980 956" fill="none" stroke="#e4a8b8" strokeWidth="20" />
    <g fill="none" strokeWidth="9" strokeDasharray="10 10" stroke="#ec9ba8">
      <path d="M1800 1332 1880 1310 1920 1330 1895 1360M1880 1345 1900 1270 1960 1210" />
    </g>
    <path d="M1905 180 1900 225 1920 230 1908 215M1915 110 1920 150 1895 120M1930 525 1965 485 1972 565 1930 535M1890 1360 1915 1330 1885 1350" fill="none" stroke="#d8b286" strokeWidth="5" />
    <path d="M1670 1020 1674 1060 1680 1105 1700 1180M1677 1110 1690 1140 1682 1175M1695 1105 1712 1175M1667 1050 1680 1090" stroke="#5c79e8" strokeWidth="4" strokeDasharray="3 7" fill="none" />
    <g fill="#9c9fc5">
      <rect x="1094" y="237" width="17" height="17" /><rect x="1133" y="260" width="17" height="17" /><rect x="1215" y="417" width="17" height="17" /><rect x="1397" y="518" width="17" height="17" /><rect x="1555" y="745" width="15" height="15" /><rect x="1655" y="1251" width="15" height="15" /><rect x="552" y="1374" width="16" height="16" /><rect x="718" y="1394" width="17" height="16" /><rect x="252" y="1123" width="12" height="10" />
    </g>
    <g fill="#99dcc0"><circle cx="1492" cy="345" r="14" /><path d="M745 240 760 250 750 268z" opacity=".5" /><circle cx="1350" cy="1368" r="15" /><path d="M1238 505 1255 488 1260 505 1248 515zM1188 980 1210 990 1195 1010z" opacity=".7" /></g>
    <path d="M1325 88H1352V118H1330z" fill="#c3c2c1" />
    <g fill="none" stroke="#d5c29a" strokeWidth="3" strokeDasharray="10 7"><path d="M1660 190 1710 180 1740 230M1800 430 1830 440M1870 420 1890 450M1780 510Q1830 480 1845 505" /></g>
    <path d="M1810 1040 1840 980 1835 940 1890 885M1845 950 1900 970 1870 1000M1920 1060 1960 1080" fill="none" stroke="#f6f5f2" strokeWidth="5" />
    <g fill="none" stroke="#9cbf9a" strokeWidth="3"><path d="M1845 832V820M1838 820q7-24 14 0zM1858 842V828M1851 828q7-24 14 0zM1765 764q7-20 12 0M1778 770q7-20 12 0" /></g>
    <path d="M789 1275 842 1305 900 1330 925 1365" stroke="#cbc7d8" strokeWidth="16" fill="none" />
    <path d="M888 1312c-3 0-3 5-3 11l-12 8v3l12-3v8l-4 3v2l7-1 7 1v-2l-4-3v-8l12 3v-3l-12-8c0-6 0-11-3-11z" fill="#9c86cc" />
    <g fontFamily='"Noto Sans", sans-serif' paintOrder="stroke" stroke="#f4f3ef" strokeOpacity=".75" strokeLinejoin="round">
      {labels.map((l, i) => (
        <text key={i} transform={`${sheetShift[l.s]} translate(${l.x} ${l.y}) rotate(${l.rot ?? 0})`} fontSize={l.size} textLength={l.w} lengthAdjust="spacingAndGlyphs" strokeWidth={l.rot ? 3 : 6} fontStyle={l.italic ? "italic" : "normal"} fill={l.color ?? "#717171"}>{l.t}</text>
      ))}
      <text fontSize="22" fill="#866156" strokeOpacity="0"><textPath href="#bridge">Baba Banda Singh Bahadur Setu</textPath></text>
    </g>
    <g fontFamily='"Noto Sans", sans-serif' fontSize="25">
      <rect x="1601" y="884" width="92" height="47" rx="4" fill="#f1cfc5" stroke="#dfb0a3" strokeWidth="3" />
      <text x="1612" y="917" textLength="73" fill="#8b6f69" stroke="#8b6f69" strokeWidth=".6">NH44</text>
      <rect x="1711" y="1049" width="77" height="46" rx="4" fill="#eccdd6" stroke="#d3a5b4" strokeWidth="3" />
      <text x="1724" y="1081" textLength="52" fontWeight="700" fill="#947682">NE3</text>
    </g>
  </svg>
);

const Marker = () => (
  <MarkerPin>
    <svg width="52" height="42" viewBox="0 0 52 42">
      <defs>
        <linearGradient id="shade"><stop offset="0" stopColor="#000" stopOpacity=".55" /><stop offset="1" stopColor="#000" stopOpacity="0" /></linearGradient>
        <linearGradient id="leaf" x1="0" y1="0" x2="0" y2="1"><stop offset="0" stopColor="#7dba26" /><stop offset="1" stopColor="#60a01b" /></linearGradient>
      </defs>
      <path d="M16 38 24 27Q34 20 37 26 36 31 16 39z" fill="url(#shade)" />
      <path d="M15.500 2.500C8 2.500 2 8.500 2 16c0 9 8.500 15 13.500 23C20.500 31 29 25 29 16c0-7.500-6-13.500-13.500-13.500z" fill="url(#leaf)" stroke="#62951b" strokeWidth="1" />
      <circle cx="15.500" cy="16.500" r="6.500" fill="#fff" />
      <path d="M14 12.200h2.800v2H14zM13.300 15.200h3.500v3.700h1v1.500h-4.800v-1.500H14.300v-2.200h-1z" fill="#6dab22" />
    </svg>
  </MarkerPin>
);

export default function App() {
  return (
    <>
      <GlobalStyle />
      <Window>
        <TabEdge />
        <AppFrame>
          <Decoration />
          <Columns>
            <Sidebar>
              <SideTitle><IconSlot $w={29} $pad={4}><Wrench /></IconSlot>Simulated Drone Parameters</SideTitle>
              <SideText>
                Use the sliders to simulate various drone parameters. This<br />
                allows for a realistic real-time simulation of the drone's<br />
                behavior.
              </SideText>
              <SideItem><IconSlot $w={22} $pad={5}><PinEmoji w={9} h={15} /></IconSlot>Latitude: 28.62002</SideItem>
              <SideItem><IconSlot $w={23} $pad={2}><Takeoff /></IconSlot>Altitude: 42.08 m</SideItem>
              <SideItem><IconSlot $w={23} $pad={3}><Puff /></IconSlot>Speed: 9.80 m/s</SideItem>
              <SideItem><IconSlot $w={22} $pad={2}><Prohibited /></IconSlot>Distance to Restricted Zone: 156.57 m</SideItem>
            </Sidebar>
            <Main>
              <Toolbar>
                <DeployButton>Deploy</DeployButton>
                <svg width="12" height="16" viewBox="0 0 12 16" fill="#fafafa">
                  <circle cx="6" cy="3" r="1.700" /><circle cx="6" cy="8" r="1.700" /><circle cx="6" cy="13" r="1.700" />
                </svg>
              </Toolbar>
              <Heading as="h1" $size={37} $height={53} $gap={24}>
                <IconSlot $w={65} $pad={8} $drop={6}><Helicopter /></IconSlot>Targeted Drone Activity Classifier
              </Heading>
              <Heading $size={23.5} $height={34} $gap={15} $tracking={-0.45}>
                <IconSlot $w={41} $pad={5} $drop={3}><Magnifier /></IconSlot>Prediction Status
              </Heading>
              <Banner>**Normal**</Banner>
              <Updated><IconSlot $w={23} $pad={3} $drop={1}><Clock /></IconSlot>Last updated at: 2025-05-11 13:43:24</Updated>
              <Heading $size={23.5} $height={34} $gap={15} $tracking={-0.45}>
                <IconSlot $w={41} $pad={10} $drop={2}><PinEmoji w={16} h={27} /></IconSlot>Drone Location
              </Heading>
              <MapFrame>
                <CityMap />
                <Marker />
                <ZoomControl>
                  <ZoomButton><svg width="13" height="13" stroke="#000" strokeWidth="2"><path d="M.5 6.500h12M6.500.5v12" /></svg></ZoomButton>
                  <ZoomButton><svg width="13" height="13" stroke="#000" strokeWidth="2"><path d="M.5 6.500h12" /></svg></ZoomButton>
                </ZoomControl>
                <Attribution>
                  <svg width="12" height="8"><path fill="#4c7be1" d="M0 0h12v4H0z" /><path fill="#ffd500" d="M0 4h12v3H0z" /><path fill="#e0bc00" d="M0 7h12v1H0z" /></svg>
                  <a>Leaflet</a> | © <a>OpenStreetMap</a> contributors
                </Attribution>
              </MapFrame>
            </Main>
          </Columns>
          <Scrollbar />
        </AppFrame>
      </Window>
    </>
  );
}
